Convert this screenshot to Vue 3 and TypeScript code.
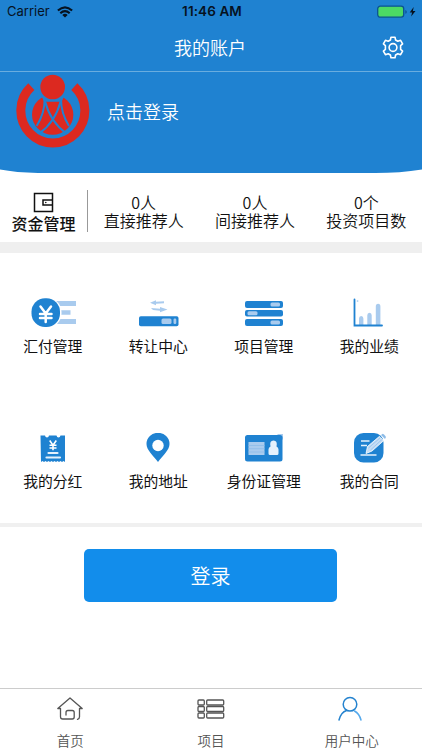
<script setup lang="ts">
interface Stat { value: string; label: string }
interface Entry { icon: string; label: string }

const stats: Stat[] = [
  { value: '0人', label: '直接推荐人' },
  { value: '0人', label: '间接推荐人' },
  { value: '0个', label: '投资项目数' },
]

const entries: Entry[] = [
  { icon: 'pay', label: '汇付管理' },
  { icon: 'transfer', label: '转让中心' },
  { icon: 'project', label: '项目管理' },
  { icon: 'chart', label: '我的业绩' },
  { icon: 'bonus', label: '我的分红' },
  { icon: 'address', label: '我的地址' },
  { icon: 'identity', label: '身份证管理' },
  { icon: 'contract', label: '我的合同' },
]
</script>

<template>
  <div class="screen">
    <header class="top">
      <div class="status">
        <div class="carrier">
          <span>Carrier</span>
          <svg width="16" height="12" viewBox="0 0 16 12" fill="none" stroke="#06121f" stroke-width="2.1">
            <path d="M.9 4.6Q8-2 15.1 4.6M3.3 7.2Q8 2.9 12.7 7.2" />
            <path d="M8 11.5 5.3 8.9Q8 6.5 10.7 8.9Z" fill="#06121f" stroke="none" />
          </svg>
        </div>
        <span class="time">11:46 AM</span>
        <svg class="battery" width="40" height="14" viewBox="0 0 40 14">
          <rect x=".7" y="1.2" width="26" height="11" rx="2.6" fill="#4cd964" stroke="#0b5390" stroke-width="1.3" />
          <path d="M28.3 5v3.8q1.5-.6 1.5-1.9T28.3 5" fill="#0b5390" />
          <path d="m36.7 2-4 5.5h2.4l-1 4 4.4-5.6h-2.6z" fill="#06121f" />
        </svg>
      </div>
      <div class="nav">
        <h1>我的账户</h1>
        <svg class="gear" width="22" height="23" viewBox="0 0 22 23" fill="none" stroke="#fff" stroke-width="1.6" stroke-linejoin="round">
          <path d="M9 1.2h4l.6 2.8 2.2 1.3 2.8-1 2 3.5-2 1.8v3.8l2 1.8-2 3.5-2.8-1-2.2 1.3-.6 2.8H9L8.400 19l-2.200-1.300-2.800 1-2-3.500 2-1.800V9.600l-2-1.800 2-3.500 2.800 1L8.400 4z" />
          <circle cx="11" cy="11.500" r="3.900" />
        </svg>
      </div>
      <div class="profile">
        <svg class="logo" width="74" height="75" viewBox="50 12 222 225">
          <path d="M96 50A96 97 0 1 0 225 50" fill="none" stroke="#dc2920" stroke-width="27" />
          <ellipse cx="160" cy="134" rx="62" ry="60" fill="#dc2920" />
          <path d="M120 62 134 95H187L202 62 180 40H140Z" fill="#1f82d1" />
          <g fill="none" stroke="#1f82d1" stroke-width="6">
            <path d="M136 88Q136 130 112 168M185 88Q185 130 209 168" />
            <path d="M137 94Q154 158 201 190M184 94Q167 158 120 190" />
          </g>
          <circle cx="160" cy="51" r="37" fill="#dc2920" />
        </svg>
        <span>点击登录</span>
      </div>
    </header>
    <svg class="curve" width="422" height="6" viewBox="0 0 422 6"><path d="M0 0H422V1.500Q400 5 375 5H38Q16 4.500 0 1.500Z" fill="#1f82d1" /></svg>

    <section class="summary">
      <div class="funds">
        <svg width="21" height="21" viewBox="0 0 21 21" fill="none" stroke="#111" stroke-width="1.500">
          <path d="M1.500 1.500h18v18h-18zM19.500 8H10v5h9.500" /><circle cx="12.800" cy="10.500" r=".8" fill="#111" stroke="none" />
        </svg>
        <span>资金管理</span>
      </div>
      <div v-for="s in stats" :key="s.label" class="stat">
        <span>{{ s.value }}</span>
        <span>{{ s.label }}</span>
      </div>
    </section>

    <main class="entries">
      <div v-for="e in entries" :key="e.icon" class="entry">
        <svg width="50" height="34" viewBox="0 0 50 34">
          <g v-if="e.icon === 'pay'">
            <path d="M26 3h22v5H26zM33 12.200h9.500v4.600H33zM26 21h22v5H26z" fill="#a9cbee" />
            <rect x="3" y="0" width="30.500" height="29.500" rx="14" fill="#fff" />
            <rect x="3.500" y=".3" width="28.500" height="28.700" rx="13.500" fill="#1f82d1" />
            <path d="m12.500 8.500 5.200 7L23 8.500M12 16h11.500M12 20h11.500M17.700 15.500v8.500" fill="none" stroke="#fff" stroke-width="2.500" stroke-linecap="round" />
          </g>
          <g v-else-if="e.icon === 'transfer'">
            <rect x="6" y="18.300" width="39.500" height="10" rx="1.800" fill="#1f82d1" />
            <rect x="28.500" y="20.500" width="10" height="5.500" rx="1.500" fill="#a9cbee" />
            <rect x="40.500" y="20.500" width="2.800" height="5.500" rx="1.200" fill="#a9cbee" />
            <path d="m17 4.700 6-2.400v1.500l8-.5v2l-8 .4v1.500zM18 10l9 .7V9l7.500 2.500-7.500 2.800v-1.600L20 12z" fill="#a9cbee" />
          </g>
          <g v-else-if="e.icon === 'project'">
            <g fill="#1f82d1"><rect x="6" y="3" width="38" height="7" rx="2" /><rect x="6" y="12" width="38" height="6.500" rx="2" /><rect x="6" y="21" width="38" height="7" rx="2" /></g>
            <g fill="#a9cbee"><rect x="31.500" y="4.500" width="9.500" height="4" rx="1.500" /><rect x="8.500" y="13.300" width="10" height="4" rx="1.500" /><rect x="31.500" y="22.500" width="9.500" height="4" rx="1.500" /></g>
          </g>
          <g v-else-if="e.icon === 'chart'" transform="translate(2 0)">
            <path d="M13 27.500v-7a2.200 2.500 0 0 1 4.400 0v7zM21.300 27.500V17.200a2.200 2.500 0 0 1 4.400 0v10.300zM29.800 27.500V8.500a2.300 2.700 0 0 1 4.600 0v19z" fill="#a9cbee" />
            <path d="M8.500 1.500v26H36" fill="none" stroke="#1f82d1" stroke-width="1.800" stroke-linecap="round" />
            <rect x="10.800" y="2.300" width="1.500" height="1.500" fill="#a9cbee" />
          </g>
          <g v-else-if="e.icon === 'bonus'">
            <path d="M12.500 2.500h4.500q.3 2 2 2t2-2h7.500q.4 2 2 2t2-2h4.500v26.500l-1.500-1-1.500 1-1.500-1-1.500 1-1.500-1-1.500 1-1.500-1-1.500 1-1.500-1-1.500 1-1.500-1-1.500 1-1.500-1-1.500 1-1.500-1-1.500 1z" fill="#1f82d1" />
            <path d="m21.700 7.500 3.300 4.700 3.300-4.700M21.500 12.300h7M21.500 15h7M25 12v5.200" fill="none" stroke="#fff" stroke-width="1.600" />
            <path d="M20.500 20h9M18.500 24.500h13.500" stroke="#e5f1fc" stroke-width="2.200" stroke-linecap="round" />
          </g>
          <g v-else-if="e.icon === 'address'">
            <path d="M25 29C20 22.500 13.500 17 13.500 11a11.500 11.200 0 0 1 23 0C36.500 17 30 22.500 25 29z" fill="#1f82d1" /><circle cx="25" cy="12.500" r="5.700" fill="#fff" />
          </g>
          <g v-else-if="e.icon === 'identity'">
            <path d="M38 1h6v6z" fill="#a9cbee" /><rect x="6" y="2" width="37.500" height="26.500" rx="2.500" fill="#1f82d1" />
            <rect x="9.500" y="9" width="16" height="13" fill="#a9cbee" /><path d="M9.500 12.500h16M9.500 15.700h16M9.500 19h16" stroke="#8dbbe8" stroke-width=".8" />
            <path d="M31.500 13.500q-1.300-5.800 3-6 4.300.2 3 6 2 .8 2 3v4q0 1.500-1.500 1.500h-7q-1.500 0-1.500-1.500v-4q0-2.200 2-3z" fill="#e5f1fc" />
          </g>
          <g v-else>
            <rect x="10" y="0" width="29.500" height="29.500" rx="9.500" fill="#1f82d1" />
            <path d="M17 8h8.500M17 12.500h6M16.500 22h16" stroke="#e5f1fc" stroke-width="1.500" />
            <path d="m22 20.500 1.500-7L35.500 3.300l4 4.500-11.500 10.200z" fill="#c5ddf5" stroke="#fff" stroke-width=".8" />
            <path d="m37 2 1.700-1.300q1 0 3.300 3.300l-1 2z" fill="#8ebce8" /><path d="m24.500 15 12-10.500M26.500 17 38 6.500" stroke="#8ebce8" stroke-width=".7" />
          </g>
        </svg>
        <span>{{ e.label }}</span>
      </div>
    </main>

    <div class="action"><button type="button">登录</button></div>

    <nav class="tabs">
      <div class="tab">
        <svg width="28" height="26" viewBox="0 0 28 26" fill="none" stroke="#555" stroke-width="1.300" stroke-linecap="round" stroke-linejoin="round">
          <path d="M4.500 12.500H1.800L14 2l12.200 10.500h-2.700v8.300q0 2.200-2 2.500M4.500 12.500v8.300q0 2.200 2.200 2.200h9.500q2 0 2-2v-4.500q0-2-2-2H12q-2 0-2 2v2.500" />
        </svg><span>首页</span>
      </div>
      <div class="tab">
        <svg width="28" height="26" viewBox="0 0 28 26" fill="none" stroke="#555" stroke-width="1.300">
          <rect x="1" y="4" width="6.300" height="5" rx="1" /><rect x="9.700" y="4" width="17" height="5" rx="1" />
          <rect x="1" y="10.500" width="6.300" height="5" rx="1" /><rect x="9.700" y="10.500" width="17" height="5" rx="1" />
          <rect x="1" y="17" width="6.300" height="5" rx="1" /><rect x="9.700" y="17" width="17" height="5" rx="1" />
        </svg><span>项目</span>
      </div>
      <div class="tab">
        <svg class="user" width="28" height="26" viewBox="0 0 28 26" fill="none" stroke="#2583cf" stroke-width="1.500" stroke-linecap="round">
          <circle cx="14" cy="8.300" r="6.800" /><path d="M3 24q2-7.700 7.500-9.500" /><path d="M18.500 15q4.700 2.500 6.500 9" stroke="#55a9ec" />
        </svg><span>用户中心</span>
      </div>
    </nav>
  </div>
</template>

<style>
body { margin: 0; }
</style>

<style scoped>
.screen {
  width: 422px;
  height: 750px;
  display: flex;
  flex-direction: column;
  overflow: hidden;
  background: #fff;
  color: #111;
  font-family: "Noto Sans CJK SC", sans-serif;
  font-weight: 350;
}
svg { display: block; flex: none; }
.top { height: 168px; background: #1f82d1; color: #fff; }
.status {
  height: 23px;
  display: grid;
  grid-template-columns: 1fr auto 1fr;
  align-items: center;
  padding: 0 5px 0 7px;
  box-sizing: border-box;
  font: 13px/23px Inter, sans-serif;
  color: #06121f;
}
.carrier { display: flex; align-items: center; gap: 7px; }
.time { font-size: 13.500px; font-weight: 600; letter-spacing: .1px; }
.battery { justify-self: end; }
.nav {
  height: 49px;
  box-sizing: border-box;
  border-bottom: 1px solid #69addf;
  display: grid;
  grid-template-columns: 1fr auto 1fr;
  align-items: center;
  padding-right: 18px;
}
.nav h1 { grid-column: 2; margin: 0 0 0 16px; font-size: 18px; font-weight: 350; line-height: 48px; }
.gear { justify-self: end; }
.profile { height: 96px; display: flex; align-items: flex-start; padding: 2px 0 0 16px; gap: 17px; font-size: 18px; }
.profile span { line-height: 74px; }
.curve { height: 6px; }
.summary { height: 79px; box-sizing: border-box; border-bottom: 11px solid #efefef; display: flex; }
.funds {
  width: 88px;
  height: 42px;
  margin-top: 16px;
  box-sizing: border-box;
  border-right: 1px solid #999;
  display: flex;
  flex-direction: column;
  align-items: center;
  padding: 2px 0 0;
  font-size: 16px;
  font-weight: 500;
  line-height: 20px;
}
.stat { flex: 1; display: flex; flex-direction: column; align-items: center; padding-top: 19px; font-size: 16px; line-height: 18px; white-space: nowrap; }
.entries {
  height: 274px;
  box-sizing: border-box;
  border-bottom: 4px solid #f0f0f0;
  display: grid;
  grid-template-columns: repeat(4, 105.500px);
  grid-template-rows: 135px 135px;
}
.entry { display: flex; flex-direction: column; align-items: center; padding-top: 45px; font-size: 14.800px; font-weight: 400; line-height: 28px; }
.action { flex: 1; padding: 22px 85px 0 84px; }
.action button {
  width: 100%;
  height: 53px;
  padding: 0;
  border: 0;
  border-radius: 5px;
  background: #128deb;
  color: #fff;
  font: 350 20px/51px "Noto Sans CJK SC", sans-serif;
}
.tabs { height: 62px; box-sizing: border-box; border-top: 1px solid #ccc; display: grid; grid-template-columns: repeat(3, 1fr); }
.tab { display: flex; flex-direction: column; align-items: center; padding-top: 7px; font-size: 13.500px; line-height: 36px; color: #555; }
.user { margin-right: 3px; }
</style>
